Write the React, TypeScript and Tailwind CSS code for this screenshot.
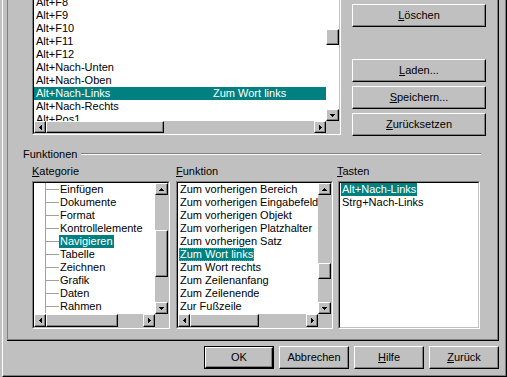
import React from "react";

const raised =
  "border border-t-white border-l-white border-r-black border-b-black shadow-[inset_-1px_-1px_#808080] bg-[#c0c0c0]";

function Tri({ dir }: { dir: "up" | "down" | "left" | "right" }) {
  if (dir === "down" || dir === "up") {
    const rows = dir === "down" ? [[0, 5], [1, 3], [2, 1]] : [[2, 1], [1, 3], [0, 5]];
    return (
      <svg width="5" height="3" shapeRendering="crispEdges">
        {rows.map(([x, w], i) => (
          <rect key={i} x={x} y={i} width={w} height={1} fill="black" />
        ))}
      </svg>
    );
  }
  const cols = dir === "right" ? [[0, 5], [1, 3], [2, 1]] : [[2, 1], [1, 3], [0, 5]];
  return (
    <svg width="3" height="5" shapeRendering="crispEdges">
      {cols.map(([y, h], i) => (
        <rect key={i} x={i} y={y} width={1} height={h} fill="black" />
      ))}
    </svg>
  );
}

function SBtn({ dir, className }: { dir: "up" | "down" | "left" | "right"; className: string }) {
  return (
    <div className={`${raised} ${className} flex items-center justify-center shrink-0`}>
      <Tri dir={dir} />
    </div>
  );
}

function Btn({ children, className }: { children: React.ReactNode; className: string }) {
  return (
    <div className={`${raised} ${className} flex items-center justify-center whitespace-nowrap`}>
      {children}
    </div>
  );
}

const topRows: [string, string, boolean][] = [
  ["Alt+F8", "", false],
  ["Alt+F9", "", false],
  ["Alt+F10", "", false],
  ["Alt+F11", "", false],
  ["Alt+F12", "", false],
  ["Alt+Nach-Unten", "", false],
  ["Alt+Nach-Oben", "", false],
  ["Alt+Nach-Links", "Zum Wort links", true],
  ["Alt+Nach-Rechts", "", false],
  ["Alt+Pos1", "", false],
];

const kategorie = [
  "Einfügen",
  "Dokumente",
  "Format",
  "Kontrollelemente",
  "Navigieren",
  "Tabelle",
  "Zeichnen",
  "Grafik",
  "Daten",
  "Rahmen",
];

const funktion = [
  "Zum vorherigen Bereich",
  "Zum vorherigen Eingabefeld",
  "Zum vorherigen Objekt",
  "Zum vorherigen Platzhalter",
  "Zum vorherigen Satz",
  "Zum Wort links",
  "Zum Wort rechts",
  "Zum Zeilenanfang",
  "Zum Zeilenende",
  "Zur Fußzeile",
];

function Frame({ className, children }: { className: string; children: React.ReactNode }) {
  return (
    <div className={`border-t border-l border-t-[#808080] border-l-[#808080] border-r border-b border-r-white border-b-white ${className}`}>
      <div className="h-full border-t border-l border-t-black border-l-black border-r border-b border-r-[#c0c0c0] border-b-[#c0c0c0] bg-white flex flex-col">
        {children}
      </div>
    </div>
  );
}

export default function App() {
  return (
    <div className="w-[507px] h-[377px] bg-[#c0c0c0] pl-[2px] overflow-hidden font-['Liberation_Sans',Arial,sans-serif] text-[11px] leading-[13px] text-black select-none">
      <div className="h-full border-l border-l-white border-r border-r-black border-b border-b-black">
        <div className="h-full border-r border-r-[#808080] border-b border-b-[#808080] pl-[4px] flex flex-col">
          {/* tab page */}
          <div className="w-[492px] h-[341px] shrink-0 border-r border-r-black border-b border-b-black">
            <div className="h-full border-l border-l-[#808080] border-r border-r-[#808080] border-b border-b-[#808080] flex flex-col">
              {/* top section */}
              <div className="flex items-start">
                <div className="ml-[24px] w-[309px] h-[135px] border-l border-l-[#808080] border-r border-b border-r-white border-b-white">
                  <div className="h-full border-l border-l-black border-r border-b border-r-[#c0c0c0] border-b-[#c0c0c0] bg-white flex flex-col">
                    <div className="flex h-[121px]">
                      <div className="flex-1 overflow-hidden">
                        <div className="-mt-[4px]">
                          {topRows.map(([a, b, sel]) => (
                            <div
                              key={a}
                              className={`h-[13px] flex whitespace-nowrap ${sel ? "bg-[#008080] text-white" : ""}`}
                            >
                              <div className="w-[179px] pl-[2px]">{a}</div>
                              <div>{b}</div>
                            </div>
                          ))}
                        </div>
                      </div>
                      <div className="w-[13px] flex flex-col">
                        <div className="h-[29px]" />
                        <div className={`${raised} h-[16px]`} />
                        <div className="flex-1" />
                        <SBtn dir="down" className="h-[12px] w-[13px]" />
                      </div>
                    </div>
                    <div className="flex h-[12px] bg-[#c0c0c0]">
                      <SBtn dir="left" className="w-[12px] h-[12px]" />
                      <div className={`${raised} w-[118px] h-[12px]`} />
                      <div className="flex-1" />
                      <SBtn dir="right" className="w-[12px] h-[12px]" />
                      <div className="w-[13px]" />
                    </div>
                  </div>
                </div>
                <div className="ml-[11px] w-[134px] flex flex-col">
                  <Btn className="mt-[4px] h-[23px]">
                    <span className="underline">L</span>öschen
                  </Btn>
                  <Btn className="mt-[32px] h-[23px]">
                    <span className="underline">L</span>aden...
                  </Btn>
                  <Btn className="mt-[4px] h-[23px]">
                    <span className="underline">S</span>peichern...
                  </Btn>
                  <Btn className="mt-[4px] h-[23px]">
                    <span className="underline">Z</span>urücksetzen
                  </Btn>
                </div>
              </div>

              {/* Funktionen group */}
              <div className="mt-[12px] h-[13px] flex ml-[15px]">
                <span className="whitespace-nowrap">Funktionen</span>
                <div className="flex-1 ml-[4px] mr-[16px] mt-[5px] h-[2px] border-t border-t-[#808080] border-b border-b-white" />
              </div>

              <div className="mt-[4px] h-[13px] flex ml-[24px]">
                <div className="w-[138px]">
                  <span className="underline">K</span>ategorie
                </div>
                <div className="ml-[6px] w-[157px]">
                  <span className="underline">F</span>unktion
                </div>
                <div className="ml-[4px] w-[142px]">
                  <span className="underline">T</span>asten
                </div>
              </div>

              <div className="mt-[3px] flex ml-[24px]">
                {/* Kategorie */}
                <Frame className="w-[138px] h-[148px]">
                  <div className="flex h-[131px]">
                    <div className="w-[121px] overflow-hidden">
                      {kategorie.map((k) => (
                        <div key={k} className="h-[13px] flex whitespace-nowrap">
                          <div className="w-[11px] shrink-0" />
                          <div className="w-[14px] h-full shrink-0 border-l border-l-[#a0a0a0] flex items-center">
                            <div className="h-[1px] w-full bg-[#a0a0a0]" />
                          </div>
                          <span className={`px-[1px] h-[13px] ${k === "Navigieren" ? "bg-[#008080] text-white" : ""}`}>
                            {k}
                          </span>
                        </div>
                      ))}
                    </div>
                    <div className="w-[13px] flex flex-col bg-[#c0c0c0]">
                      <SBtn dir="up" className="h-[12px] w-[13px]" />
                      <div className="h-[35px]" />
                      <div className={`${raised} h-[47px]`} />
                      <div className="flex-1" />
                      <SBtn dir="down" className="h-[12px] w-[13px]" />
                    </div>
                  </div>
                  <div className="flex h-[13px] bg-[#c0c0c0]">
                    <SBtn dir="left" className="w-[12px] h-[13px]" />
                    <div className={`${raised} w-[72px] h-[13px]`} />
                    <div className="flex-1" />
                    <SBtn dir="right" className="w-[12px] h-[13px]" />
                    <div className="w-[13px]" />
                  </div>
                </Frame>

                {/* Funktion */}
                <Frame className="ml-[6px] w-[157px] h-[148px]">
                  <div className="flex h-[131px]">
                    <div className="w-[140px] overflow-hidden">
                      {funktion.map((f) => (
                        <div key={f} className="h-[13px] flex whitespace-nowrap pl-[1px]">
                          <span
                            className={`px-[1px] h-[13px] ${
                              f === "Zum Wort links"
                                ? "bg-[#008080] text-white outline-1 outline-dotted outline-[#e07070] -outline-offset-1"
                                : ""
                            }`}
                          >
                            {f}
                          </span>
                        </div>
                      ))}
                    </div>
                    <div className="w-[13px] flex flex-col bg-[#c0c0c0]">
                      <SBtn dir="up" className="h-[12px] w-[13px]" />
                      <div className="h-[68px]" />
                      <div className={`${raised} h-[16px]`} />
                      <div className="flex-1" />
                      <SBtn dir="down" className="h-[12px] w-[13px]" />
                    </div>
                  </div>
                  <div className="flex h-[13px] bg-[#c0c0c0]">
                    <SBtn dir="left" className="w-[12px] h-[13px]" />
                    <div className={`${raised} w-[69px] h-[13px]`} />
                    <div className="flex-1" />
                    <SBtn dir="right" className="w-[12px] h-[13px]" />
                    <div className="w-[13px]" />
                  </div>
                </Frame>

                {/* Tasten */}
                <Frame className="ml-[5px] w-[142px] h-[148px]">
                  {["Alt+Nach-Links", "Strg+Nach-Links"].map((t, i) => (
                    <div key={t} className="h-[13px] flex whitespace-nowrap pl-[1px]">
                      <span className={`px-[1px] h-[13px] ${i === 0 ? "bg-[#008080] text-white" : ""}`}>{t}</span>
                    </div>
                  ))}
                </Frame>
              </div>
            </div>
          </div>

          {/* bottom buttons */}
          <div className="mt-[5px] flex justify-end gap-[5px] pr-[6px]">
            <div className="w-[70px] h-[23px] border border-black">
              <Btn className="h-full">OK</Btn>
            </div>
            <Btn className="w-[70px] h-[23px]">Abbrechen</Btn>
            <Btn className="w-[70px] h-[23px]">
              <span className="underline">H</span>ilfe
            </Btn>
            <Btn className="w-[70px] h-[23px]">
              <span className="underline">Z</span>urück
            </Btn>
          </div>
        </div>
      </div>
    </div>
  );
}
